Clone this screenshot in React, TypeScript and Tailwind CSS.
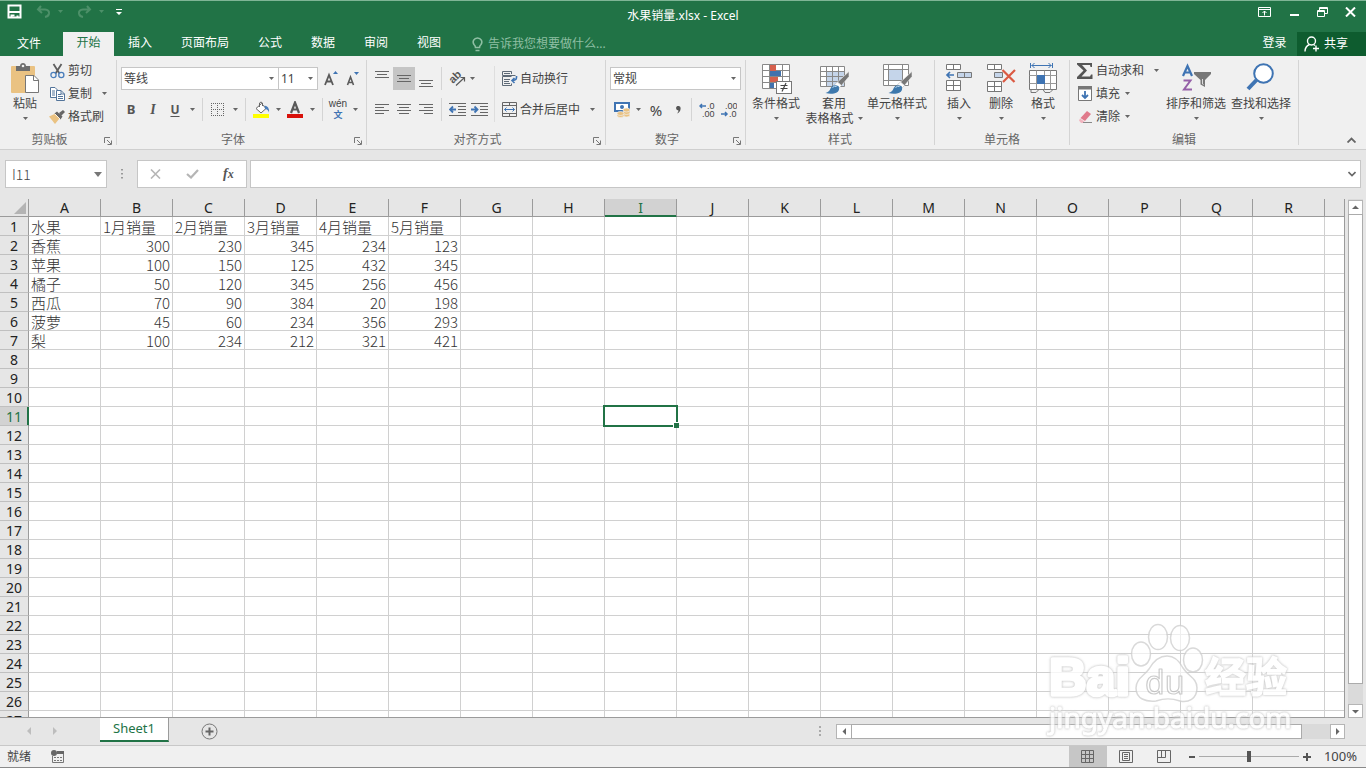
import React from "react";
import type { ReactNode } from "react";

const UI = "font-['Noto_Sans','Noto_Sans_CJK_SC',sans-serif]";

function Caret({ className = "text-[#666]" }: { className?: string }) {
  return (
    <svg width="5" height="3" viewBox="0 0 5 3" className={`shrink-0 ${className}`} aria-hidden="true">
      <path d="M0 0h5L2.5 3z" fill="currentColor" />
    </svg>
  );
}

function Drop({ label, className = "w-3" }: { label: string; className?: string }) {
  return (
    <button aria-label={label} className={`flex h-[23px] shrink-0 items-center justify-center ${className}`}>
      <Caret />
    </button>
  );
}

function Tool({ label, active, className = "w-[22px]", children }: { label: string; active?: boolean; className?: string; children: ReactNode }) {
  return (
    <button
      aria-label={label}
      className={`flex h-[23px] shrink-0 items-center justify-center ${className} ${active ? "bg-[#c5c5c5]" : ""}`}
    >
      {children}
    </button>
  );
}

function Sep({ className = "" }: { className?: string }) {
  return <div className={`h-[23px] w-px shrink-0 bg-[#d4d4d4] ${className}`} />;
}

function Group({ title, launcher, className, children }: { title: string; launcher?: boolean; className: string; children: ReactNode }) {
  return (
    <>
      <section aria-label={title} className={`flex shrink-0 flex-col ${className}`}>
        <div className="flex h-[76px] items-start">{children}</div>
        <div className="flex h-4 items-center text-[#666]">
          <h2 className="flex-1 text-center leading-4">{title}</h2>
          {launcher && (
            <button aria-label={`${title}设置`} className="flex h-4 w-[17px] items-center justify-center pt-0.5">
              <svg width="8" height="8" viewBox="0 0 8 8" fill="none" stroke="#777">
                <path d="M.5 6V.5H6M3 3l4 4M7.5 3.5v4h-4" />
              </svg>
            </button>
          )}
        </div>
      </section>
      <div className="my-1 w-px shrink-0 bg-[#d4d4d4]" />
    </>
  );
}

function Big({ icon, label, second, className }: { icon: ReactNode; label: string; second?: string; className: string }) {
  return (
    <button className={`mt-1.5 flex shrink-0 flex-col items-center whitespace-nowrap ${className}`}>
      <span className="flex h-8 items-start justify-center">{icon}</span>
      <span className="mt-0.5 h-[15px] leading-[15px]">{label}</span>
      <span className="flex h-[15px] items-center gap-1 leading-[15px]">
        {second}
        <Caret />
      </span>
    </button>
  );
}

function Small({ icon, label, drop }: { icon: ReactNode; label: string; drop?: string }) {
  return (
    <div className="flex h-[23px] items-center">
      <button className="flex items-center gap-[3px] whitespace-nowrap">
        <span className="flex h-4 w-4 items-center justify-center">{icon}</span>
        {label}
      </button>
      {drop && <Drop label={`${label}选项`} className={drop} />}
    </div>
  );
}

function Select({ label, value, className }: { label: string; value: string; className: string }) {
  return (
    <div className={`relative shrink-0 ${className}`}>
      <select aria-label={label} className="h-[23px] w-full appearance-none border border-[#c6c6c6] bg-white pl-0.5 text-[#444] outline-none">
        <option>{value}</option>
      </select>
      <span className="pointer-events-none absolute top-2.5 right-[5px]">
        <Caret />
      </span>
    </div>
  );
}

/* ---------- icons ---------- */

const PasteIcon = () => (
  <svg width="30" height="32" viewBox="0 0 30 32">
    <rect x="1" y="4" width="24" height="27" rx="1" fill="#eac282" />
    <path d="M6 4h4c0-4 6-4 6 0h4v5H6z" fill="#6d6d6d" />
    <circle cx="13" cy="4" r="1.3" fill="#f0f0f0" />
    <path d="M15.5 13.500h8.500l4.500 4.500v12.500h-13z" fill="#fff" stroke="#777" />
    <path d="M23.500 13.500v5h5" fill="none" stroke="#777" />
  </svg>
);
const CutIcon = () => (
  <svg width="15" height="16" viewBox="0 0 15 16" fill="none">
    <path d="M3.500 1l6 9.500M11.500 1l-6 9.500" stroke="#5f5f5f" strokeWidth="1.800" />
    <circle cx="3.500" cy="12" r="2.600" stroke="#4a7ebb" strokeWidth="1.300" />
    <circle cx="11.300" cy="12" r="2.600" stroke="#4a7ebb" strokeWidth="1.300" />
  </svg>
);
const CopyIcon = () => (
  <svg width="15" height="14" viewBox="0 0 15 14" stroke="#53749a">
    <path d="M.5.5H5L7.500 3v7.500h-7z" fill="#fff" />
    <path d="M2 4h3M2 6h3M2 8h3" />
    <path d="M6.500 3.500H11L14.500 7v6.500h-8z" fill="#fff" />
    <path d="M8 7.500h3M8 9.500h5M8 11.500h5M11 3.500V7h3.500" fill="none" />
  </svg>
);
const PainterIcon = () => (
  <svg width="16" height="14" viewBox="0 0 16 14">
    <path d="M0 6.500l5.500-2.500 5 4.500L6 14z" fill="#eac282" />
    <path d="M5.500 3.500L8 1.500l5.500 5-2 3z" fill="#666" />
    <path d="M10 3l4-3 2 2-4 4z" fill="#666" />
    <path d="M6 4l5 5" stroke="#fff4df" />
  </svg>
);
const BorderIcon = () => (
  <svg width="14" height="14" viewBox="0 0 14 14" fill="none" stroke="#666">
    <path d="M0 .5h13M0 6.500h13M.5 0v13M6.500 0v13M12.500 0v13" strokeDasharray="1 1" />
    <path d="M0 12.500h13" strokeDasharray="1 1" />
  </svg>
);
const FillIcon = () => (
  <svg width="17" height="17" viewBox="0 0 17 17">
    <path d="M3 7.500L8.500 2.500l4.500 5L8 12z" fill="#fff" stroke="#666" />
    <path d="M6.500 6V2q1.500-2 3 0v3" fill="none" stroke="#666" />
    <path d="M11.500 4.500q5 .5 4.500 7-1-3.500-4-3.500z" fill="#4a7ebb" />
    <rect y="13" width="16" height="4" fill="#ff0" />
  </svg>
);
const FontColorIcon = () => (
  <svg width="16" height="17" viewBox="0 0 16 17">
    <path d="M4 12L8 1.500 12 12M5.500 8.500h5" fill="none" stroke="#5a5a5a" strokeWidth="2.200" />
    <rect y="13" width="16" height="4" fill="#d8110a" />
  </svg>
);
const Lines = ({ rows }: { rows: [number, number, number][] }) => (
  <svg width="16" height="16" viewBox="0 0 16 16" stroke="#666" fill="none">
    {rows.map(([x, y, w]) => (
      <path key={y} d={`M${x} ${y}h${w}`} />
    ))}
  </svg>
);
const OrientIcon = () => (
  <svg width="18" height="16" viewBox="0 0 18 16" fill="none" stroke="#5a5a5a">
    <text x="0" y="0" transform="translate(5 13) rotate(-45)" fill="#555" stroke="none" className="font-['Liberation_Sans',sans-serif] text-[11px] font-bold">ab</text>
    <path d="M8 14.500l8-7.500M12.500 6.500h4v4" strokeWidth="1.200" />
  </svg>
);
const IndentIcon = ({ right }: { right?: boolean }) => (
  <svg width="17" height="14" viewBox="0 0 17 14" fill="none">
    <path d="M0 .5h17M9 3.500h8M9 6.500h8M9 9.500h8M0 12.500h17" stroke="#666" />
    <path d={right ? "M0 6.500h6M3.500 3.500l3 3-3 3" : "M1 6.500h6M4 3.500l-3 3 3 3"} stroke="#3f74b3" strokeWidth="1.800" />
  </svg>
);
const WrapIcon = () => (
  <svg width="16" height="16" viewBox="0 0 16 16" fill="none" stroke="#5f6b78">
    <path d="M9.500 3V.5h-9v4h13M9.500 5.500h-9v9h9v-2M2 2.500h6M2 8.500h6M2 10.500h5M2 12.500h6" />
    <path d="M14.500 5v1.500q0 3-4.500 3M12.500 7L10 9.500l2.500 2.500" stroke="#3f74b3" strokeWidth="1.600" />
  </svg>
);
const MergeIcon = () => (
  <svg width="16" height="16" viewBox="0 0 16 16" fill="none" stroke="#666">
    <path d="M.5.5h14v14H.5zM.5 3.500h14M.5 11.500h14M7.500.5v3M7.500 11.500v3" />
    <path d="M2.500 7.500h10M4.500 5.500l-2 2 2 2M10.500 5.500l2 2-2 2" stroke="#3f74b3" />
  </svg>
);
const MoneyIcon = () => (
  <svg width="17" height="16" viewBox="0 0 17 16">
    <rect x="1" y="1" width="14" height="8" fill="#fff" stroke="#3f74b3" strokeWidth="2" />
    <circle cx="8" cy="5" r="2" fill="#3f74b3" />
    <g fill="#eac282" stroke="#f0f0f0" strokeWidth=".7">
      <ellipse cx="12.500" cy="13" rx="3.500" ry="2" />
      <ellipse cx="12.500" cy="10.500" rx="3.500" ry="2" />
      <ellipse cx="12.500" cy="8" rx="3.500" ry="2" />
      <ellipse cx="6.500" cy="13.500" rx="3.500" ry="2" />
      <ellipse cx="6.500" cy="11.500" rx="3.500" ry="2" />
    </g>
  </svg>
);
const CondIcon = () => (
  <svg width="31" height="32" viewBox="0 0 31 32">
    <path d="M1.500 2.500h27v24h-27z" fill="#fff" />
    <path d="M1.500 2.500h27v24h-27zM1.500 8.500h27M1.500 14.500h27M1.500 20.500h27M8.500 2.500v24M21.500 2.500v24" fill="none" stroke="#888" />
    <path d="M9 3h6v6H9zM9 15h8v5H9z" fill="#d6604d" />
    <path d="M9 9h11v5H9zM9 21h4v5H9z" fill="#4272ad" />
    <rect x="15.500" y="19.500" width="15" height="12" fill="#fff" stroke="#777" />
    <path d="M19.500 23.500h7M19.500 26.500h7M25 21l-4 8.500" stroke="#444" strokeWidth="1.200" />
  </svg>
);
const Brush = () => (
  <>
    <path d="M30 9.500v5L22.500 23.500l-4-3.500z" fill="#777" stroke="#f0f0f0" strokeWidth=".6" />
    <path d="M18.500 20l4 3.500-2.500 2.500-4.500-3.500z" fill="#fff" stroke="#aaa" strokeWidth=".5" />
    <path d="M6.500 31q4-1.500 5-4.500 2-5 8-2.500 2.500 6-4.500 7.500-4 .8-8.500-.5z" fill="#3e79ad" />
    <path d="M13.500 25.500q2-2 4-1" fill="none" stroke="#c5ddf0" />
  </>
);
const TableStyleIcon = () => (
  <svg width="31" height="32" viewBox="0 0 31 32">
    <path d="M1.500 4.500h24v20h-24z" fill="#fff" />
    <path d="M8 9h17v15H8z" fill="#c5d5ea" />
    <path d="M1.500 4.500h24v20h-24zM1.500 9.500h24M1.500 14.500h24M1.500 19.500h24M7.500 4.500v20M13.500 4.500v20M19.500 4.500v20" fill="none" stroke="#888" />
    <Brush />
  </svg>
);
const CellStyleIcon = () => (
  <svg width="31" height="32" viewBox="0 0 31 32">
    <path d="M1.500 2.500h25v21h-25zM1.500 7.500h25M1.500 18.500h25M6.500 2.500v21M20.500 2.500v21" fill="#fff" stroke="#888" />
    <path d="M7 8h13v10H7z" fill="#c5d5ea" />
    <Brush />
  </svg>
);
const InsertIcon = () => (
  <svg width="28" height="30" viewBox="0 0 28 30" fill="#fff" stroke="#777">
    <path d="M1.500 2.500h14v5h-14zM8.500 2.500v5M1.500 18.500h14v10h-14zM8.500 18.500v10M1.500 23.500h14" />
    <path d="M12.500 10.500h14v5h-14zM19.500 10.500v5" fill="#c5d5ea" />
    <path d="M2 13h7M5 10l-3 3 3 3" fill="none" stroke="#3f74b3" strokeWidth="1.700" />
  </svg>
);
const DeleteIcon = () => (
  <svg width="30" height="30" viewBox="0 0 30 30" fill="#fff" stroke="#777">
    <path d="M1.500 2.500h14v5h-14zM8.500 2.500v5M1.500 19.500h14v10h-14zM8.500 19.500v10M1.500 24.500h14" />
    <path d="M8.500 10.500h8v5h-8z" fill="#c5d5ea" />
    <path d="M16.500 8l12 12M29 8L17 20" stroke="#db5a43" strokeWidth="2.200" />
  </svg>
);
const FormatIcon = () => (
  <svg width="30" height="32" viewBox="0 0 30 32" fill="none">
    <path d="M2.500 1v5M24.500 1v5M3.500 3.500h20M6.500 1L4 3.500 6.500 6M20.500 1L23 3.500 20.500 6" stroke="#3f74b3" />
    <path d="M1.500 8.500h27v19h-27z" fill="#fff" stroke="#777" />
    <path d="M1.500 13.500h27M1.500 21.500h27M8.500 8.500v19M16.500 8.500v19M22.500 8.500v19" stroke="#999" />
    <rect x="9" y="13" width="8" height="9" fill="#3f74b3" />
    <path d="M3 28v2.500h5l3-3h4l2 3h5l3-3" stroke="#777" />
  </svg>
);
const SumIcon = () => (
  <svg width="16" height="16" viewBox="0 0 16 16">
    <path d="M0 0h15v4h-1.500l-.5-2H5l5 5.500L4.500 13.500H13l1-2h1.500V16H0v-2l6.500-6.500L0 1.500z" fill="#555" />
  </svg>
);
const FillDownIcon = () => (
  <svg width="14" height="15" viewBox="0 0 14 15">
    <path d="M.5.5h13v14H.5z" fill="#fff" stroke="#777" />
    <path d="M0 0h14v3.500H0z" fill="#777" />
    <path d="M7 5v7M4 9l3 3 3-3" stroke="#3f74b3" strokeWidth="1.800" fill="none" />
  </svg>
);
const EraserIcon = () => (
  <svg width="15" height="14" viewBox="0 0 15 14">
    <path d="M9 1l4 3-6 7-4.500-3z" fill="#e07a8b" />
    <path d="M2 8.500l4.500 3L5 13H3L1 10.500z" fill="#f2b6c0" />
    <path d="M5 12.500h9" stroke="#888" />
  </svg>
);
const SortIcon = () => (
  <svg width="32" height="32" viewBox="0 0 32 32" fill="none">
    <path d="M3 14L7.500 4 12 14M4.500 10.500h6" stroke="#3f74b3" strokeWidth="2.200" />
    <path d="M3.500 18.500h7L4 27.500h8" stroke="#9560a8" strokeWidth="2" />
    <path d="M14 10h17v2l-6 6v7l-4.500-2.500V18L14 12z" fill="#777" />
    <path d="M22.500 17v5l1 .5" stroke="#ddd" />
  </svg>
);
const FindIcon = () => (
  <svg width="30" height="30" viewBox="0 0 30 30" fill="none">
    <path d="M2 27l8.500-9" stroke="#3f74b3" strokeWidth="4" />
    <circle cx="17.500" cy="11.500" r="9.300" fill="#fff" stroke="#3f74b3" strokeWidth="2" />
  </svg>
);
const DecimalIcon = ({ less }: { less?: boolean }) => (
  <svg width="16" height="16" viewBox="0 0 16 16" className="font-['Liberation_Sans',sans-serif]" fontSize="9">
    <text x={less ? 4 : 8} y="7" fill="#444">{less ? ".00" : ".0"}</text>
    <text x={less ? 8 : 3} y="15" fill="#444">{less ? ".0" : ".00"}</text>
    <path d={less ? "M0 12h6M4 10l2 2-2 2" : "M1 4h6M3 2L1 4l2 2"} fill="none" stroke="#3f74b3" strokeWidth="1.500" />
  </svg>
);

/* ---------- title bar and tabs ---------- */

function TitleBar() {
  return (
    <header className="grid h-8 shrink-0 grid-cols-[1fr_auto_1fr] border-t border-[#7fb596] text-white">
      <div className="flex h-[21px] items-center pl-[7px]">
        <button aria-label="保存">
          <svg width="15" height="15" viewBox="0 0 15 15" fill="none" stroke="#fff" strokeWidth="2">
            <path d="M1.500 1.500h12v12h-12zM1.500 8h12" />
            <path d="M4.500 14v-2.500h3M10.500 14v-2.500" />
          </svg>
        </button>
        <button aria-label="撤消" className="ml-3.5 flex items-center gap-[7px] text-[#4d9069]">
          <svg width="15" height="13" viewBox="0 0 15 13" fill="none" stroke="currentColor" strokeWidth="2">
            <path d="M5 1L2 4.500 6 8M2 4.500h7q4.500.5 4 4-.5 3-4 3.500" />
          </svg>
          <Caret className="text-[#4d9069]" />
        </button>
        <button aria-label="恢复" className="ml-3.5 flex items-center gap-[7px] text-[#4d9069]">
          <svg width="15" height="13" viewBox="0 0 15 13" fill="none" stroke="currentColor" strokeWidth="2">
            <path d="M10 1l3 3.500L9 8M13 4.500H6Q1.500 5 2 8.500q.5 3 4 3.500" />
          </svg>
          <Caret className="text-[#4d9069]" />
        </button>
        <button aria-label="自定义快速访问工具栏" className="ml-3">
          <svg width="6" height="6" viewBox="0 0 6 6" fill="#fff">
            <path d="M0 0h6v1H0zM0 3h6L3 6z" />
          </svg>
        </button>
      </div>
      <h1 className="flex h-[29px] items-center font-normal">水果销量.xlsx - Excel</h1>
      <div className="flex h-[21px] items-center justify-end gap-[15px] pr-2.5">
        <button aria-label="功能区显示选项">
          <svg width="13" height="10" viewBox="0 0 13 10" fill="none" stroke="#fff">
            <path d="M.5.5h12v9H.5zM.5 2.500h12M6.500 8.500V4M4.500 6l2-2 2 2" />
          </svg>
        </button>
        <button aria-label="最小化" className="flex h-3 w-4 items-end justify-center pb-0.5">
          <span className="h-0.5 w-[9px] bg-white" />
        </button>
        <button aria-label="向下还原">
          <svg width="11" height="10" viewBox="0 0 11 10" fill="none" stroke="#fff">
            <path d="M2.500 3V.5h8v6H8M2.500 1.500h8M.5 3.500h7v6h-7zM.5 4.500h7" />
          </svg>
        </button>
        <button aria-label="关闭" className="ml-0.5">
          <svg width="11" height="10" viewBox="0 0 11 10" stroke="#fff" strokeWidth="2">
            <path d="M1 .5l9 9M10 .5l-9 9" />
          </svg>
        </button>
      </div>
    </header>
  );
}

function Tabs() {
  return (
    <nav className="flex h-6 shrink-0 items-stretch text-white">
      <button className="mr-[5px] w-[58px]">文件</button>
      <button className="w-[51px] bg-[#f0f0f0] pb-0.5 text-[#217346]">开始</button>
      {["插入", "页面布局", "公式", "数据", "审阅", "视图"].map((t) => (
        <button key={t} className="mr-px px-3.5 pb-0.5 whitespace-nowrap">
          {t}
        </button>
      ))}
      <label htmlFor="tell-me" className="ml-4 flex items-center">
        <svg width="11" height="15" viewBox="0 0 11 15" fill="none" stroke="#8fbfa3" strokeWidth="1.600">
          <path d="M3.500 10.500Q3.500 9 2 7.500C0 4.500 2 1 5.500 1S11 4.500 9 7.500Q7.500 9 7.500 10.500zM3.500 13.500h4" />
        </svg>
      </label>
      <input id="tell-me" aria-label="告诉我您想要做什么" placeholder="告诉我您想要做什么..." className="ml-[5px] w-40 bg-transparent text-white outline-none placeholder:text-[#8fbfa3]" />
      <div className="flex-1" />
      <button className="w-[45px] pb-0.5">登录</button>
      <button className="flex w-[69px] items-center gap-1 bg-[#0e5c2f] pl-[7px]">
        <svg width="16" height="16" viewBox="0 0 16 16" fill="none" stroke="#fff" strokeWidth="1.400">
          <circle cx="7.500" cy="5" r="4" />
          <path d="M1 15.500q0-5 4.500-7M9.500 8.500l1.500 1M12 9.500v6M9 12.500h6" />
        </svg>
        共享
      </button>
    </nav>
  );
}

/* ---------- ribbon ---------- */

function Ribbon() {
  return (
    <div className="flex h-[94px] shrink-0 overflow-hidden border-b border-[#cfcfcf] bg-[#f0f0f0] text-[#444]">
      <Group title="剪贴板" launcher className="w-[116px]">
        <Big icon={<PasteIcon />} label="粘贴" className="ml-1 w-[42px]" />
        <div className="ml-[3px] pt-[3px]">
          <Small icon={<CutIcon />} label="剪切" />
          <Small icon={<CopyIcon />} label="复制" drop="ml-1.5 w-3" />
          <Small icon={<PainterIcon />} label="格式刷" />
        </div>
      </Group>

      <Group title="字体" launcher className="w-[249px]">
        <div className="flex flex-col gap-2 pt-[11px]">
          <div className="flex pl-1">
            <Select label="字体" value="等线" className="w-[158px]" />
            <Select label="字号" value="11" className="-ml-px w-[40px]" />
            <Tool label="增大字号" className="ml-0.5 w-[22px]">
              <svg width="14" height="15" viewBox="0 0 14 15">
                <path d="M1 14L5 4l4 10M2.500 10.500h5" fill="none" stroke="#5a5a5a" strokeWidth="1.800" />
                <path d="M9 3l2.500-3L14 3z" fill="#3f74b3" />
              </svg>
            </Tool>
            <Tool label="减小字号">
              <svg width="14" height="15" viewBox="0 0 14 15">
                <path d="M1.500 14L4.500 6l3 8M3 11.500h3.500" fill="none" stroke="#5a5a5a" strokeWidth="1.600" />
                <path d="M8 1h5l-2.500 3z" fill="#3f74b3" />
              </svg>
            </Tool>
          </div>
          <div className="flex pl-[3px]">
            <Tool label="加粗"><b className="text-[13px] text-[#555]">B</b></Tool>
            <Tool label="倾斜"><b className="font-['Liberation_Serif',serif] text-sm text-[#555] italic">I</b></Tool>
            <Tool label="下划线"><b className="text-[#555] underline underline-offset-2">U</b></Tool>
            <Drop label="下划线选项" />
            <Sep className="ml-1" />
            <Tool label="边框" className="ml-1 w-[22px]"><BorderIcon /></Tool>
            <Drop label="边框选项" />
            <Sep className="ml-1" />
            <Tool label="填充颜色" className="ml-1 w-[22px]"><FillIcon /></Tool>
            <Drop label="填充颜色选项" />
            <Tool label="字体颜色"><FontColorIcon /></Tool>
            <Drop label="字体颜色选项" />
            <Sep className="ml-1" />
            <Tool label="显示拼音字段" className="ml-1 w-[22px] flex-col">
              <span className="font-['Liberation_Sans',sans-serif] text-[10px] leading-[10px]">wén</span>
              <span className="text-[9px] leading-[11px] font-bold text-[#3f74b3]">文</span>
            </Tool>
            <Drop label="拼音选项" />
          </div>
        </div>
      </Group>

      <Group title="对齐方式" launcher className="w-[238px]">
        <div className="flex w-[127px] shrink-0 flex-col gap-2 pt-[11px] pl-1">
          <div className="flex">
            <Tool label="顶端对齐"><Lines rows={[[1, 0.5, 14], [3, 3.5, 10], [1, 6.5, 14]]} /></Tool>
            <Tool label="垂直居中" active><Lines rows={[[1, 4.5, 14], [3, 7.5, 10], [1, 10.5, 14]]} /></Tool>
            <Tool label="底端对齐"><Lines rows={[[1, 9.5, 14], [3, 12.5, 10], [1, 15.5, 14]]} /></Tool>
            <Sep className="ml-1" />
            <Tool label="方向" className="ml-1 w-[22px]"><OrientIcon /></Tool>
            <Drop label="方向选项" className="w-2" />
          </div>
          <div className="flex">
            <Tool label="左对齐"><Lines rows={[[1, 2.5, 14], [1, 5.5, 9], [1, 8.5, 14], [1, 11.5, 9]]} /></Tool>
            <Tool label="居中"><Lines rows={[[1, 2.5, 14], [3, 5.5, 10], [1, 8.5, 14], [3, 11.5, 10]]} /></Tool>
            <Tool label="右对齐"><Lines rows={[[1, 2.5, 14], [6, 5.5, 9], [1, 8.5, 14], [6, 11.5, 9]]} /></Tool>
            <Sep className="ml-1" />
            <Tool label="减少缩进量" className="ml-1 w-[22px]"><IndentIcon /></Tool>
            <Tool label="增加缩进量"><IndentIcon right /></Tool>
          </div>
        </div>
        <div className="mt-2.5 h-14 w-px bg-[#dedede]" />
        <div className="flex flex-col gap-2 pt-[11px] pl-[7px]">
          <button className="flex h-[23px] items-center gap-0.5"><WrapIcon />自动换行</button>
          <div className="flex">
            <button className="flex h-[23px] items-center gap-0.5 whitespace-nowrap"><MergeIcon />合并后居中</button>
            <Drop label="合并选项" className="ml-1 w-4" />
          </div>
        </div>
      </Group>

      <Group title="数字" launcher className="w-[139px]">
        <div className="flex flex-col gap-2 pt-[11px] pl-1">
          <Select label="数字格式" value="常规" className="w-[131px]" />
          <div className="flex">
            <Tool label="会计数字格式" className="w-6"><MoneyIcon /></Tool>
            <Drop label="会计格式选项" className="w-2" />
            <Tool label="百分比样式" className="ml-0.5 w-6"><span className="text-[15px] text-[#444]">%</span></Tool>
            <Tool label="千位分隔样式" className="w-5">
              <svg width="5" height="8" viewBox="0 0 5 8" fill="#555">
                <path d="M0 2a2.300 2.300 0 1 1 4.600.5Q4.500 6 1 7.500q1.500-1.500 1.500-3Q0 4 0 2z" />
              </svg>
            </Tool>
            <Sep className="ml-[3px]" />
            <Tool label="增加小数位数" className="ml-1 w-[22px]"><DecimalIcon /></Tool>
            <Tool label="减少小数位数"><DecimalIcon less /></Tool>
          </div>
        </div>
      </Group>

      <Group title="样式" className="w-[188px]">
        <Big icon={<CondIcon />} label="条件格式" className="ml-0.5 w-14" />
        <Big icon={<TableStyleIcon />} label="套用" second="表格格式" className="w-[60px]" />
        <Big icon={<CellStyleIcon />} label="单元格样式" className="w-[66px]" />
      </Group>

      <Group title="单元格" className="w-[134px]">
        <Big icon={<InsertIcon />} label="插入" className="ml-[3px] w-[42px]" />
        <Big icon={<DeleteIcon />} label="删除" className="w-[42px]" />
        <Big icon={<FormatIcon />} label="格式" className="w-[42px]" />
      </Group>

      <Group title="编辑" className="w-[228px]">
        <div className="w-[93px] pt-[3px] pl-[7px]">
          <Small icon={<SumIcon />} label="自动求和" drop="ml-1.5 w-3" />
          <Small icon={<FillDownIcon />} label="填充" drop="ml-px w-3" />
          <Small icon={<EraserIcon />} label="清除" drop="ml-px w-3" />
        </div>
        <Big icon={<SortIcon />} label="排序和筛选" className="w-[66px]" />
        <Big icon={<FindIcon />} label="查找和选择" className="w-16" />
      </Group>

      <div className="flex flex-1 items-end justify-end pr-2.5 pb-1.5">
        <button aria-label="折叠功能区">
          <svg width="9" height="6" viewBox="0 0 9 6" fill="none" stroke="#666" strokeWidth="1.800">
            <path d="M.5 5.500l4-4 4 4" />
          </svg>
        </button>
      </div>
    </div>
  );
}

function FormulaBar() {
  return (
    <div className="flex shrink-0 items-center pt-2.5 pr-[5px] pb-[11px] pl-[5px]">
      <div className="flex h-7 w-[102px] items-center border border-[#c6c6c6] bg-white pr-1">
        <input aria-label="名称框" defaultValue="I11" className="w-full min-w-0 flex-1 pl-1.5 font-['Noto_Sans_CJK_SC',sans-serif] text-sm font-light text-[#444] outline-none" />
        <button aria-label="名称列表">
          <svg width="8" height="5" viewBox="0 0 8 5"><path d="M0 0h8L4 5z" fill="#777" /></svg>
        </button>
      </div>
      <svg width="30" height="12" viewBox="0 0 30 12" fill="#999">
        <path d="M14 1h2v1.500h-2zM14 5h2v1.500h-2zM14 9h2v1.500h-2z" />
      </svg>
      <div className="flex h-7 w-[110px] items-center justify-around border border-[#c6c6c6] bg-white">
        <button aria-label="取消">
          <svg width="11" height="10" viewBox="0 0 11 10" stroke="#b5b5b5" strokeWidth="1.600"><path d="M1 .5l9 9M10 .5l-9 9" /></svg>
        </button>
        <button aria-label="输入">
          <svg width="13" height="10" viewBox="0 0 13 10" fill="none" stroke="#b5b5b5" strokeWidth="2.200"><path d="M1 5l4 3.500L12 1" /></svg>
        </button>
        <button aria-label="插入函数" className="font-['Liberation_Serif',serif] text-sm leading-4 font-bold text-[#555] italic">
          f<span className="text-xs">x</span>
        </button>
      </div>
      <div className="ml-[3px] flex h-7 flex-1 items-center border border-[#c6c6c6] bg-white pr-1">
        <input aria-label="编辑栏" className="h-full flex-1 px-1 outline-none" />
        <button aria-label="展开编辑栏">
          <svg width="8" height="6" viewBox="0 0 8 6" fill="none" stroke="#666" strokeWidth="1.600"><path d="M.5 1L4 4.500 7.500 1" /></svg>
        </button>
      </div>
    </div>
  );
}

/* ---------- sheet ---------- */

const COLS = "ABCDEFGHIJKLMNOPQR".split("");
const DATA: string[][] = [
  ["水果", "1月销量", "2月销量", "3月销量", "4月销量", "5月销量"],
  ["香蕉", "300", "230", "345", "234", "123"],
  ["苹果", "100", "150", "125", "432", "345"],
  ["橘子", "50", "120", "345", "256", "456"],
  ["西瓜", "70", "90", "384", "20", "198"],
  ["菠萝", "45", "60", "234", "356", "293"],
  ["梨", "100", "234", "212", "321", "421"],
];
const ROWS = Array.from({ length: 27 }, (_, i) => i);

function Grid() {
  return (
    <div className="min-w-0 flex-1 overflow-hidden border-r border-b border-[#9b9b9b] bg-white">
      <table className="w-full table-fixed border-separate border-spacing-0 text-[#333]">
        <colgroup>
          <col className="w-[29px]" />
          {COLS.map((c) => (
            <col key={c} className="w-[72px]" />
          ))}
          <col />
        </colgroup>
        <thead>
          <tr className="h-[18px] bg-[#e6e6e6] text-sm leading-4 text-[#222]">
            <th aria-label="全选" className="border-r border-b border-[#9b9b9b] p-0">
              <svg width="12" height="12" viewBox="0 0 12 12" className="mr-0.5 ml-auto"><path d="M12 0v12H0z" fill="#b4b4b4" /></svg>
            </th>
            {COLS.map((c) => (
              <th
                key={c}
                scope="col"
                className={`border-r border-b border-r-[#9b9b9b] px-0 pt-px pb-0 font-normal ${c === "I" ? "border-b-[#217346] bg-[#d2d2d2] text-[#217346] shadow-[inset_0_-1px_0_#217346]" : "border-b-[#9b9b9b]"}`}
              >
                {c}
              </th>
            ))}
            <td className="border-b border-[#9b9b9b] p-0" />
          </tr>
        </thead>
        <tbody>
          {ROWS.map((r) => (
            <tr key={r} className="h-[19px]">
              <th
                scope="row"
                className={`border-r border-b border-b-[#c0c0c0] px-0 pt-0.5 pb-0 text-sm leading-4 font-normal ${r === 10 ? "border-r-[#217346] bg-[#d2d2d2] text-[#217346] shadow-[inset_-1px_0_0_#217346]" : "border-r-[#9b9b9b] bg-[#e6e6e6] text-[#222]"}`}
              >
                {r + 1}
              </th>
              {COLS.map((c, i) => (
                <td
                  key={c}
                  className={`border-r border-b border-[#d0d0d0] px-0.5 pt-0.5 pb-0 font-['Noto_Sans_CJK_SC',sans-serif] text-[15px] leading-4 font-light whitespace-nowrap ${r > 0 && i > 0 ? "text-right" : "text-left"} ${r === 10 && c === "I" ? "relative" : ""}`}
                >
                  {DATA[r]?.[i]}
                  {r === 10 && c === "I" && (
                    <span className="absolute -inset-0.5 border-2 border-[#217346]">
                      <span className="absolute -right-[3px] -bottom-[3px] h-1.5 w-1.5 border-t border-l border-white bg-[#217346]" />
                    </span>
                  )}
                </td>
              ))}
              <td className="border-b border-[#d0d0d0] p-0" />
            </tr>
          ))}
        </tbody>
      </table>
    </div>
  );
}

function ScrollButton({ label, d, className }: { label: string; d: string; className: string }) {
  return (
    <button aria-label={label} className={`flex shrink-0 items-center justify-center border border-[#b5b5b5] bg-white ${className}`}>
      <svg width="7" height="7" viewBox="0 0 7 7"><path d={d} fill="#666" /></svg>
    </button>
  );
}

function Watermark() {
  return (
    <svg
      width="256"
      height="124"
      viewBox="0 0 256 124"
      className="pointer-events-none absolute right-[68px] bottom-[25px] opacity-80"
      fill="#fff"
      stroke="#fff"
      strokeLinejoin="round"
    >
      <text x="7" y="76" strokeWidth="3.500" className="font-['Liberation_Sans',sans-serif] text-[52px] font-bold [filter:drop-shadow(0_0_1px_#bbb)_drop-shadow(0_0_1px_#ddd)]">Bai</text>
      <g stroke="#d0d0d0" strokeWidth="1.500" fillOpacity=".8">
        <ellipse cx="99" cy="35" rx="9.500" ry="12" />
        <ellipse cx="116" cy="18" rx="9.500" ry="12.500" />
        <ellipse cx="138" cy="19" rx="9.500" ry="12.500" />
        <ellipse cx="151" cy="41" rx="9.500" ry="12" />
        <path d="M125 37c9 0 13 6 16 12 5 8 14 10 14 20 0 11-9 15-17 13-9-3-15-3-24 0-10 1-20-2-20-13 0-9 8-12 13-19 4-7 9-13 18-13z" />
        <text x="103" y="75" stroke="#c0c0c0" strokeWidth="1.200" className="font-['Noto_Sans',sans-serif] text-[32px]">du</text>
      </g>
      <text x="163" y="73" strokeWidth="1.500" className="font-['Noto_Sans_CJK_SC',sans-serif] text-[41px] font-bold [filter:drop-shadow(0_0_1px_#bbb)_drop-shadow(0_0_1px_#ddd)]">经验</text>
      <text x="7" y="109" strokeWidth="1" className="font-['Noto_Sans',sans-serif] text-[28px] [filter:drop-shadow(0_0_1px_#bbb)_drop-shadow(0_0_1px_#ddd)]">jingyan.baidu.com</text>
    </svg>
  );
}

function SheetBar() {
  return (
    <div className="flex h-[27px] shrink-0 items-start">
      <div className="flex h-[26px] w-[100px] shrink-0 items-center gap-[22px] pl-[26px]">
        <button aria-label="上一张工作表"><svg width="5" height="8" viewBox="0 0 5 8"><path d="M5 0v8L1 4z" fill="#bdbdbd" /></svg></button>
        <button aria-label="下一张工作表"><svg width="5" height="8" viewBox="0 0 5 8"><path d="M0 0v8l4-4z" fill="#bdbdbd" /></svg></button>
      </div>
      <button className="h-6 w-[69px] border-r border-b-2 border-r-[#9b9b9b] border-b-[#217346] bg-white text-[13px] text-[#217346]">Sheet1</button>
      <button aria-label="新工作表" className="mt-[5px] ml-8">
        <svg width="17" height="17" viewBox="0 0 17 17" fill="none" stroke="#777">
          <circle cx="8.500" cy="8.500" r="7.500" />
          <path d="M8.500 4.500v8M4.500 8.500h8" stroke="#666" strokeWidth="2" />
        </svg>
      </button>
      <div className="flex-1" />
      <svg width="4" height="27" viewBox="0 0 4 27" fill="#aaa" className="mr-3.5"><path d="M1 8h2v2H1zM1 12h2v2H1zM1 16h2v2H1z" /></svg>
      <div className="mt-1.5 mr-[21px] flex h-[15px] w-[509px] bg-[#dadada]">
        <ScrollButton label="向左滚动" d="M5 0v7L1.500 3.500z" className="w-4" />
        <div className="-ml-px flex-1 border border-[#ababab] bg-white" />
        <ScrollButton label="向右滚动" d="M2 0v7l3.500-3.500z" className="ml-7 w-[15px]" />
      </div>
    </div>
  );
}

function StatusBar() {
  return (
    <footer className="flex h-[23px] shrink-0 items-center border-t border-b border-t-[#c8c8c8] border-b-[#8a8a8a] bg-[#f0f0f0] text-[#444]">
      <span className="ml-[7px]">就绪</span>
      <button aria-label="录制宏" className="ml-5">
        <svg width="13" height="13" viewBox="0 0 13 13" fill="none" stroke="#777">
          <path d="M1.500 6v6.500h11v-11H6M3 7.500h8M3 10.500h8" />
          <path d="M6 1h7v3H6z" fill="#666" stroke="none" />
          <path d="M5.500 6v6M8.500 6v6" stroke="#f0f0f0" />
          <circle cx="3" cy="3" r="3" fill="#666" stroke="none" />
        </svg>
      </button>
      <div className="flex-1" />
      <button aria-label="普通" className="flex h-full w-[38px] items-center justify-center bg-[#c6c6c6]">
        <svg width="13" height="13" viewBox="0 0 13 13" fill="none" stroke="#666"><path d="M.5.5h12v12H.5zM.5 4.500h12M.5 8.500h12M4.500.5v12M8.500.5v12" /></svg>
      </button>
      <button aria-label="页面布局视图" className="flex h-full w-[38px] items-center justify-center">
        <svg width="14" height="13" viewBox="0 0 14 13" fill="none" stroke="#666"><path d="M.5.5h13v12H.5zM3.500 2.500h7v8h-7zM5 4.500h4M5 6.500h4M5 8.500h4" /></svg>
      </button>
      <button aria-label="分页预览" className="flex h-full w-[38px] items-center justify-center">
        <svg width="14" height="13" viewBox="0 0 14 13" fill="none" stroke="#666"><path d="M.5.5h13v12H.5zM.5 7.500h8M8.500 7.500v-7M4.500.5v7" /></svg>
      </button>
      <button aria-label="缩小" className="ml-[3px] flex h-4 w-3 items-center justify-center"><span className="h-0.5 w-1.5 bg-[#555]" /></button>
      <input
        type="range"
        aria-label="显示比例"
        min="0"
        max="200"
        defaultValue="100"
        className="mx-px h-3 w-[100px] appearance-none bg-transparent [&::-webkit-slider-runnable-track]:h-px [&::-webkit-slider-runnable-track]:bg-[#aaa] [&::-webkit-slider-thumb]:-mt-[5px] [&::-webkit-slider-thumb]:h-[11px] [&::-webkit-slider-thumb]:w-1 [&::-webkit-slider-thumb]:appearance-none [&::-webkit-slider-thumb]:bg-[#555]"
      />
      <button aria-label="放大" className="flex h-4 w-3.5 items-center justify-center">
        <svg width="8" height="8" viewBox="0 0 8 8"><path d="M4 0v8M0 4h8" stroke="#555" strokeWidth="2" /></svg>
      </button>
      <button className="mr-[9px] ml-2.5 text-[13px]">100%</button>
    </footer>
  );
}

export default function App() {
  return (
    <div className={`relative flex h-screen flex-col overflow-hidden bg-[#e6e6e6] text-xs ${UI}`}>
      <div className="shrink-0 bg-[#217346]">
        <TitleBar />
        <Tabs />
      </div>
      <Ribbon />
      <FormulaBar />
      <main className="flex min-h-0 flex-1">
        <Grid />
        <div className="mr-[3px] ml-[3px] flex w-[15px] shrink-0 flex-col bg-[#dadada]">
          <ScrollButton label="向上滚动" d="M0 5h7L3.500 1.500z" className="mt-px h-[15px]" />
          <div className="-mt-px flex-1 border border-[#ababab] bg-white" />
          <ScrollButton label="向下滚动" d="M0 2h7L3.500 5.500z" className="mt-5 h-3.5" />
        </div>
      </main>
      <SheetBar />
      <StatusBar />
      <Watermark />
    </div>
  );
}
